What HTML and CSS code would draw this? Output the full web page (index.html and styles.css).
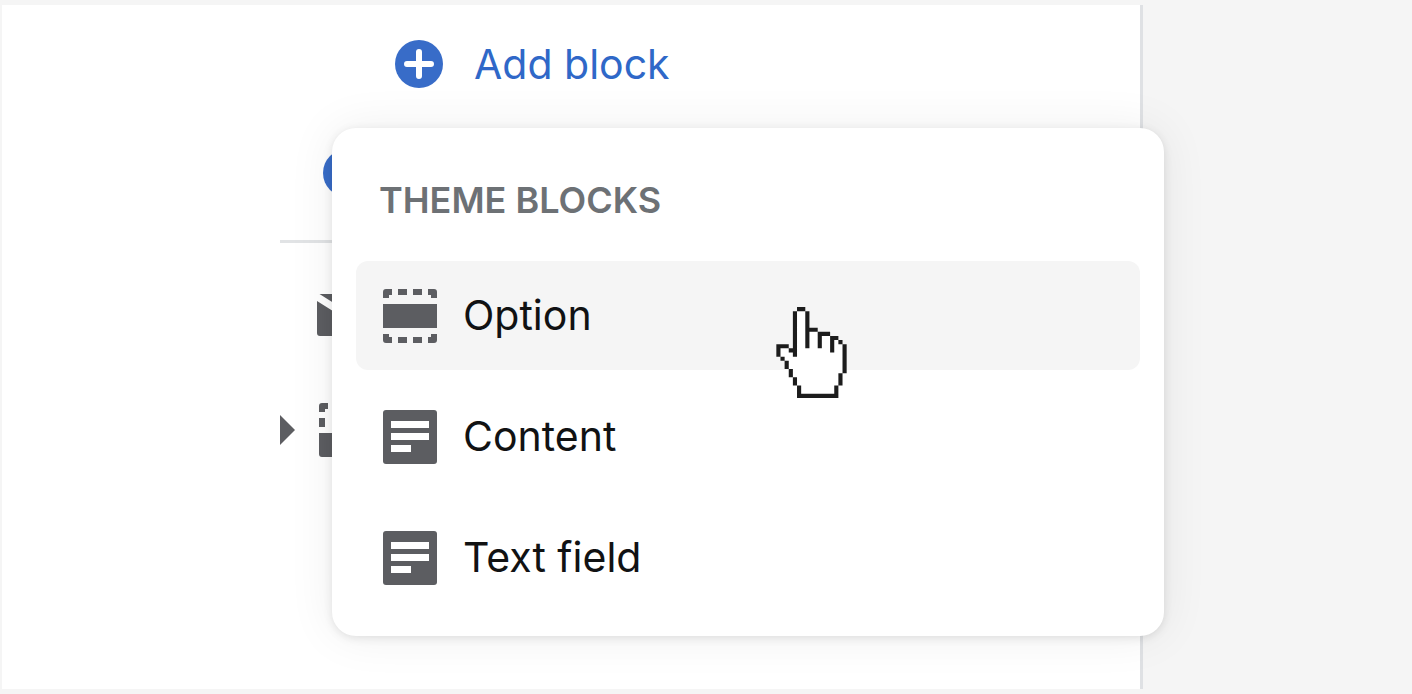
FILE: index.html
```html
<!DOCTYPE html>
<html lang="en">
<head>
<meta charset="utf-8">
<meta name="viewport" content="width=device-width, initial-scale=1">
<title>Theme blocks</title>
<link rel="stylesheet" href="styles.css">
</head>
<body>
<svg class="sprite" aria-hidden="true">
  <symbol id="plus" viewBox="0 0 48 48">
    <circle cx="24" cy="24" r="24" fill="currentColor"/>
    <path d="M24 12v24M12 24h24" stroke="#fff" stroke-width="6" stroke-linecap="round"/>
  </symbol>
  <symbol id="section" viewBox="0 0 54 54">
    <path fill="currentColor" d="M0 15h54v24H0zM0 9V3a3 3 0 0 1 3-3h6v6H6v3zM15 0h9v6h-9zM30 0h9v6h-9zM45 0h6a3 3 0 0 1 3 3v6h-6V6h-3zM0 45h6v3h3v6H3a3 3 0 0 1-3-3zM15 48h9v6h-9zM30 48h9v6h-9zM54 45v6a3 3 0 0 1-3 3h-6v-6h3v-3z"/>
  </symbol>
  <symbol id="text" viewBox="0 0 54 54">
    <rect width="54" height="54" rx="3" fill="currentColor"/>
    <path fill="#fff" d="M8 11h38v7H8zM8 23h38v7H8zM8 35h20v7H8z"/>
  </symbol>
</svg>
<div class="editor">
  <aside class="sidebar">
    <div class="tree">
      <button class="add add-block" type="button"><svg class="plus"><use href="#plus"/></svg>Add block</button>
      <button class="add add-section" type="button" aria-label="Add section"><svg class="plus"><use href="#plus"/></svg></button>
      <hr class="divider">
      <div class="row row-mail">
        <svg class="mail" viewBox="0 0 54 42"><path fill="currentColor" d="M2.500 0h49L27 15.500zM0 7l27 17L54 7v32a3 3 0 0 1-3 3H3a3 3 0 0 1-3-3z"/></svg>
      </div>
      <div class="row row-footer">
        <svg class="caret" viewBox="0 0 15 30"><path fill="currentColor" d="M0 0l15 15L0 30z"/></svg>
        <svg class="icon" viewBox="0 0 54 54"><path fill="currentColor" d="M0 9V3a3 3 0 0 1 3-3h6v6H6v3zM0 15h6v9H0zM0 30h54v21a3 3 0 0 1-3 3H3a3 3 0 0 1-3-3zM15 0h9v6h-9zM30 0h9v6h-9zM45 0h6a3 3 0 0 1 3 3v6h-6V6h-3zM48 15h6v9h-6z"/></svg>
      </div>
    </div>
    <div class="popover">
      <h2 class="heading">THEME BLOCKS</h2>
      <div class="menu">
        <button class="item active" type="button"><svg class="icon"><use href="#section"/></svg>Option</button>
        <button class="item" type="button"><svg class="icon"><use href="#text"/></svg>Content</button>
        <button class="item" type="button"><svg class="icon"><use href="#text"/></svg>Text field</button>
      </div>
      <svg class="cursor" viewBox="0 0 17 22" aria-hidden="true">
        <path fill="#fff" d="M5 1h2v5h3v1h3v1h2v1h1v7h-1v3h-1v2H6v-2H5v-2H4v-2H3v-2H2v-1H1v-2h2v1h2z"/>
        <path fill="#1c1c1c" d="M5 0h2v1H5zM4 1h1v11H4v-1H3v-1h1zM7 1h1v4h2v1H8v4H7zM10 6h3v1h-2v3h-1zM13 7h2v1h-1v3h-1zM15 8h1v1h-1zM16 9h1v7h-1zM15 16h1v3h-1zM14 19h1v3H5v-3h1v2h8zM4 17h1v2H4zM3 15h1v2H3zM2 13h1v2H2zM1 12h1v1H1zM0 9h3v1H1v2H0z"/>
      </svg>
    </div>
  </aside>
  <main class="preview"></main>
</div>
</body>
</html>
```
FILE: styles.css
```css
* {
  box-sizing: border-box;
}

body {
  margin: 0;
  background: #f5f5f5;
  color: #111213;
  font-family: Inter, "Liberation Sans", sans-serif;
}

button {
  border: 0;
  background: none;
  font: inherit;
  color: inherit;
  text-align: left;
  cursor: pointer;
}

svg {
  display: block;
  flex: none;
}

.sprite {
  position: absolute;
  width: 0;
  height: 0;
}

.editor {
  display: flex;
  min-height: 100vh;
  padding: 5px 0 5px 2px;
}

.sidebar {
  position: relative;
  flex: 1;
  background: #fff;
  border-right: 3px solid #dfe1e4;
}

.preview {
  width: 269px;
}

.tree {
  display: flex;
  flex-direction: column;
  align-items: flex-start;
  padding: 34px 0 0 278px;
  color: #5c5d61;
}

.add {
  display: flex;
  align-items: center;
  gap: 31px;
  padding: 0;
  color: #2f68c8;
  font-size: 41px;
  line-height: 50px;
}

.add-block {
  margin-left: 115px;
}

.add-section {
  margin: 60px 0 0 43px;
}

.plus {
  width: 48px;
  height: 48px;
  color: #386cc8;
}

.divider {
  align-self: stretch;
  height: 3px;
  margin: 43px 0 0;
  border: 0;
  background: #e1e3e5;
}

.row {
  display: flex;
  align-items: center;
  gap: 24px;
}

.row-mail {
  margin: 51px 0 0 37px;
}

.row-footer {
  margin-top: 67px;
}

.mail {
  width: 54px;
  height: 42px;
}

.caret {
  width: 15px;
  height: 30px;
}

.icon {
  width: 54px;
  height: 54px;
  color: #5c5d61;
}

.popover {
  position: absolute;
  top: 123px;
  left: 330px;
  right: -24px;
  padding: 48px 24px 24px;
  border-radius: 24px;
  background: #fff;
  box-shadow: 0 0 48px rgba(0, 0, 0, 0.07), 0 2px 10px rgba(0, 0, 0, 0.1);
}

.heading {
  margin: 0 0 37px;
  padding-left: 23px;
  color: #6d7175;
  font-size: 36px;
  line-height: 48px;
  font-weight: 600;
}

.menu {
  display: flex;
  flex-direction: column;
  gap: 12px;
}

.item {
  display: flex;
  align-items: center;
  gap: 26px;
  padding: 27px;
  border-radius: 12px;
  font-size: 41px;
  line-height: 55px;
}

.active {
  background: #f5f5f5;
}

.cursor {
  position: absolute;
  top: 179px;
  left: 444px;
  width: 71px;
  height: 91px;
}
```
